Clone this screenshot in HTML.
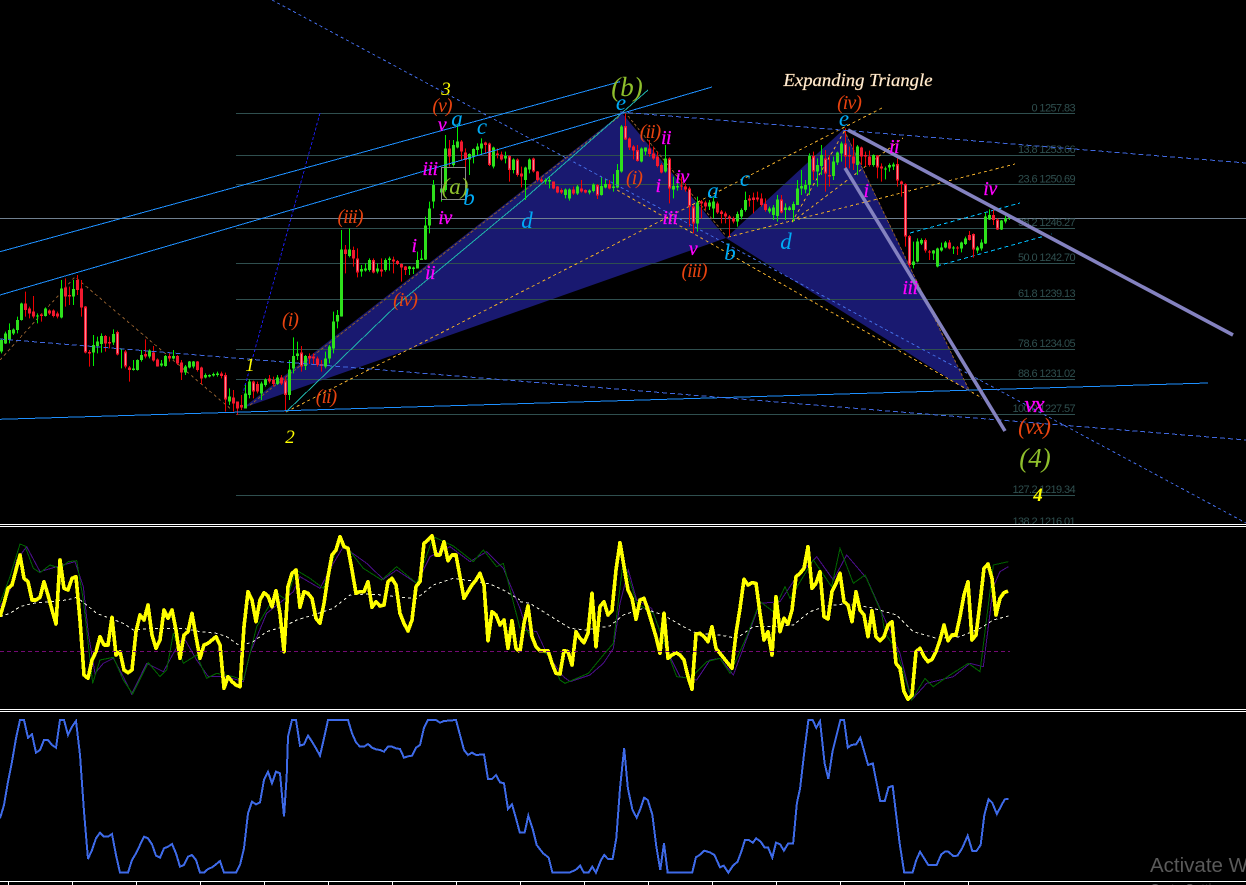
<!DOCTYPE html>
<html>
<head>
<meta charset="utf-8">
<title>Chart</title>
<style>
html,body{margin:0;padding:0;background:#000;width:1246px;height:885px;overflow:hidden}
svg{display:block}
polyline,path,line{vector-effect:non-scaling-stroke}
.c path{vector-effect:none}
text{font-family:"Liberation Serif",serif;font-style:italic;text-anchor:middle}
.o{fill:#e8430f;font-size:20px;letter-spacing:-1px}
.m{fill:#ff00ff;font-size:20px;letter-spacing:-.5px;stroke:#ff00ff;stroke-width:.25px}
.s{fill:#00aaf5;font-size:23px}
.y{fill:#ffff00;font-size:19px}
.g{fill:#8fbf2c;font-size:27px}
.f{font-family:"Liberation Sans",sans-serif;font-style:normal;text-anchor:end;fill:#2f4f4f;font-size:11px;letter-spacing:-.6px}
</style>
</head>
<body>
<svg width="1246" height="885" viewBox="0 0 1246 885" xmlns="http://www.w3.org/2000/svg">
<rect width="1246" height="885" fill="#000"/>

<!-- harmonic pattern fills -->
<polygon points="243,408 622,113 726,238" fill="#191970"/>
<polygon points="726,238 844,129 970,392" fill="#191970"/>

<!-- fib levels -->
<path fill="none" stroke="#2f4f4f" stroke-width="1" shape-rendering="crispEdges" d="M236 113.5H1075M236 155.5H1075M236 184.5H1075M236 228.5H1075M236 263.5H1075M236 299.5H1075M236 349.5H1075M236 379.5H1075M236 414.5H1075M236 495.5H1075"/>
<path d="M0 218.5H1246" stroke="#708090" stroke-width="1" shape-rendering="crispEdges" fill="none"/>

<!-- fib labels -->
<text class="f" x="1075" y="111.5">0 1257.83</text>
<text class="f" x="1075" y="153">13.8 1253.66</text>
<text class="f" x="1075" y="182.5">23.6 1250.69</text>
<text class="f" x="1075" y="226">38.2 1246.27</text>
<text class="f" x="1075" y="261">50.0 1242.70</text>
<text class="f" x="1075" y="297">61.8 1239.13</text>
<text class="f" x="1075" y="347">78.6 1234.05</text>
<text class="f" x="1075" y="377">88.6 1231.02</text>
<text class="f" x="1075" y="412">100.0 1227.57</text>
<text class="f" x="1075" y="493">127.2 1219.34</text>
<text class="f" x="1075" y="525">138.2 1216.01</text>

<!-- dashed lines in and around the patterns -->
<g fill="none" shape-rendering="crispEdges" stroke-width="1">
<path d="M0 360L75 277L232 410" stroke="#8b5a2b" stroke-dasharray="3 3"/>
<path d="M250 405L620 116M628 116L726 236M844 130L970 392" stroke="#8b5a2b" stroke-dasharray="3 2"/>
<path d="M286 412L882 108M728 237L1015 164M792 222L903 138M792 222L845 130M617 190L982 398" stroke="#e8a92a" stroke-dasharray="3 3"/>
<polyline points="286,412 398,304 523,200 648,90" stroke="#20b2aa"/>
<path d="M910 233L1020 203M937 266L1052 234" stroke="#00bfff" stroke-dasharray="4 3"/>
<path d="M320 113L243 393" stroke="#1a1ae0" stroke-dasharray="3 2"/>
</g>

<!-- candles -->
<g class="c" transform="translate(.5,60) scale(1,.33333)" fill="none" shape-rendering="crispEdges">
<path stroke="#00ee00" stroke-width="1" d="M1 838V880M5 815V852M9 790V850M13 805V825M17 770V820M21 728V782M37 760V790M45 742V770M61 660V775M73 660V735M93 825V918M97 830V880M101 820V878M113 808V855M121 865V925M133 900V932M137 898V932M141 870V905M149 868V895M161 900V920M165 885V920M173 870V898M185 915V945M189 903V925M193 903V925M205 940V955M209 943V952M213 938V950M217 935V950M229 985V1035M245 975V1045M249 958V1015M261 965V1020M265 955V980M277 945V975M289 900V1020M293 832V940M297 845V900M305 885V930M325 875V925M329 855V910M333 755V880M337 750V805M341 510V770M349 505V592M361 615V650M365 610V635M369 595V635M377 610V640M385 595V635M389 590V632M409 618V645M413 620V642M417 575V625M421 570V600M425 470V600M429 425V520M433 360V445M441 350V425M445 225V395M453 240V320M457 195V265M469 280V345M473 265V310M477 250V285M481 235V285M493 260V325M505 275V310M513 295V340M525 320V420M529 295V340M545 355V372M549 352V385M565 385V415M569 385V422M577 375V405M589 388V403M593 370V397M601 350V407M605 355V385M613 342V395M617 312V385M621 195V338M641 262V307M645 262V285M665 255V338M673 350V415M677 345V392M697 410V515M709 420V450M713 412V475M737 455V500M741 445V478M745 395V455M769 440V460M773 435V480M777 405V485M785 430V480M789 438V452M793 425V485M797 360V435M801 330V405M805 360V400M809 280V405M817 295V380M821 255V345M833 290V360M837 275V315M841 245V305M857 255V345M873 283V320M885 320V358M889 310V335M893 308V330M913 545V625M917 535V607M921 535V555M933 570V600M937 563V622M941 548V575M945 543V565M953 558V582M961 545V577M965 530V555M977 558V580M981 538V572M985 458V552M989 448V480M1001 480V510M1005 468V490M1009 470V480"/>
<path stroke="#2ee01c" stroke-width="3" d="M1 840V875M5 820V850M9 810V840M13 808V820M17 780V810M21 730V780M37 766V770M45 745V768M61 685V772M73 687V710M93 855V878M97 845V858M101 828V852M113 822V848M121 865V868M133 926V930M137 900V930M141 885V900M149 872V890M161 910V917M165 888V918M173 888V895M185 920V938M189 905V922M193 905V920M205 945V953M209 945V950M213 942V946M217 940V945M229 1010V1025M245 1000V1045M249 965V1005M261 970V1000M265 958V975M277 952V972M289 928V1005M293 888V925M297 880V888M305 888V918M325 895V920M329 860V895M333 785V865M337 765V785M341 568V770M349 568V588M361 627V635M365 625V632M369 600V630M377 625V635M385 600V630M389 595V600M409 620V627M413 622V627M417 600V625M421 595V600M425 497V598M429 445V497M433 375V425M441 385V397M445 265V390M453 255V315M457 245V262M469 282V298M473 267V290M477 260V270M481 250V265M493 262V320M505 288V295M513 298V330M525 322V360M529 298V328M545 360V364M549 360V364M565 388V405M569 388V415M577 380V400M589 392V398M593 373V393M601 378V405M605 372V382M613 380V384M617 330V382M621 200V335M641 265V305M645 262V275M665 295V335M673 378V388M677 378V382M697 428V490M709 428V440M713 425V445M737 462V485M741 450V470M745 420V450M769 445V455M773 442V465M777 418V468M785 442V450M789 442V450M793 432V450M797 385V435M801 378V385M805 375V388M809 288V375M817 315V335M821 285V318M833 305V348M837 278V308M841 250V280M857 260V315M873 285V315M885 325V328M889 315V322M893 313V320M913 605V615M917 545V605M921 540V550M933 572V580M937 565V620M941 562V572M945 547V562M953 562V565M961 548V565M965 535V552M977 562V572M981 548V565M985 470V550M989 465V478M1001 482V508M1005 475V485M1009 473V476"/>
<path stroke="#ee0000" stroke-width="1" d="M25 695V770M29 740V775M33 708V775M41 760V785M49 748V765M53 748V772M57 755V775M65 655V740M69 680V735M77 645V705M81 660V770M85 738V880M89 870V920M105 825V875M109 830V865M117 812V886M125 870V925M129 918V965M145 838V895M153 858V905M157 895V920M169 880V905M177 885V915M181 900V960M197 903V935M201 920V972M221 935V955M225 938V1055M233 990V1055M237 1025V1065M241 1005V1050M253 962V1015M257 965V1000M269 945V970M273 950V980M281 945V975M285 950V1055M301 858V935M309 880V912M313 880V915M317 890V920M321 900V935M345 555V640M353 560V620M357 565V652M373 595V640M381 595V650M393 590V640M397 600V615M401 610V665M405 618V645M449 240V320M461 240V300M465 265V350M485 245V280M489 248V318M497 265V295M501 275V302M509 285V365M517 295V350M521 320V382M533 293V338M537 333V365M541 352V368M553 365V388M557 378V400M561 385V402M573 380V405M581 360V398M585 388V400M597 372V417M609 360V388M625 160V240M629 232V270M633 255V298M637 255V305M649 240V290M653 260V300M657 275V322M661 310V340M669 292V430M681 350V390M685 370V395M689 380V500M693 435V520M701 420V475M705 422V450M717 425V462M721 450V490M725 455V490M729 465V530M733 470V490M749 405V440M753 398V460M757 395V425M761 400V440M765 415V455M781 405V460M813 275V360M825 270V395M829 285V380M845 205V325M849 260V325M853 235V330M861 260V315M865 275V320M869 272V320M877 285V355M881 310V365M897 295V380M901 362V410M905 370V560M909 525V620M925 535V578M929 570V600M949 540V568M957 558V585M969 513V542M973 520V593M993 450V495M997 475V510"/>
<path stroke="#f01a30" stroke-width="3" d="M25 730V750M29 745V760M33 755V770M41 763V768M49 752V760M53 752V768M57 760V770M65 683V710M69 705V710M77 660V690M81 685V742M85 740V878M89 876V880M105 828V850M109 846V850M117 816V884M125 875V920M129 922V930M145 882V890M153 877V902M157 898V920M169 888V896M177 888V910M181 908V938M197 905V930M201 923V955M221 940V948M225 945V1018M233 1012V1030M237 1025V1045M241 1035V1042M253 965V995M257 972V995M269 955V965M273 960V972M281 952V970M285 962V1005M301 877V920M309 888V895M313 890V895M317 895V915M321 912V918M345 568V582M353 570V595M357 595V637M373 600V637M381 628V635M393 598V605M397 603V612M401 612V622M405 620V630M449 265V290M461 245V275M465 278V300M485 248V255M489 250V315M497 280V285M501 283V298M509 288V330M517 298V345M521 340V350M533 295V335M537 335V360M541 358V365M553 365V385M557 380V398M561 390V398M573 388V400M581 385V395M585 390V397M597 375V407M609 372V385M625 198V238M629 235V262M633 260V272M637 270V303M649 265V282M653 280V295M657 290V318M661 315V338M669 295V385M681 376V380M685 380V388M689 385V440M693 440V490M701 425V430M705 428V440M717 430V458M721 455V462M725 460V470M729 470V475M733 475V485M749 415V422M753 412V420M757 412V418M761 415V435M765 432V450M781 418V458M813 288V335M825 295V340M829 345V350M845 250V290M849 285V290M853 290V310M861 262V290M865 285V290M869 290V315M877 287V322M881 320V325M897 312V362M901 365V372M905 372V530M909 528V615M925 540V572M929 575V578M949 547V565M957 562V565M969 525V540M973 522V568M993 465V480M997 478V508"/>
<path stroke="#f58a96" stroke-width="1" d="M85 745V873M117 821V879M125 880V915M225 950V1013M253 970V990M285 967V1000M301 882V915M357 600V632M373 605V632M489 255V310M509 293V325M517 303V340M533 300V330M597 380V402M625 203V233M637 275V298M669 300V380M689 390V435M693 445V485M781 423V453M813 293V330M825 300V335M845 255V285M877 292V317M897 317V357M905 377V525M909 533V610M925 545V567M973 527V563M997 483V503"/>
</g>

<!-- blue lines -->
<g fill="none" shape-rendering="crispEdges">
<path d="M0 251.7L620 81.7M0 295L712 87M0 419.3L1208 383" stroke="#1e90ff" stroke-width="1"/>
<path d="M272 0L1246 523" stroke="#4169e1" stroke-width="1" stroke-dasharray="3 3"/>
<path d="M0 339L1246 440M620 112L1246 163" stroke="#4169e1" stroke-width="1" stroke-dasharray="5 3"/>
</g>

<!-- thick triangle lines -->
<g fill="none" stroke="#8482c0" stroke-width="3.6">
<path d="M848 130L1233 335"/>
<path d="M845 168L1005 431"/>
</g>

<!-- label box -->
<rect x="441.5" y="167.5" width="24" height="32" fill="none" stroke="#8a8a8a" stroke-width="1" shape-rendering="crispEdges"/>

<!-- labels -->
<text x="858" y="86" textLength="149" lengthAdjust="spacingAndGlyphs" font-size="18" fill="#fff4e4" stroke="#e8c090" stroke-width=".35">Expanding Triangle</text>

<text class="y" x="446" y="95">3</text>
<text class="y" x="250" y="371">1</text>
<text class="y" x="290" y="443">2</text>
<text class="y" x="1038" y="501" style="font-weight:bold">4</text>

<text class="o" x="290" y="326">(i)</text>
<text class="o" x="350" y="223">(iii)</text>
<text class="o" x="405" y="306">(iv)</text>
<text class="o" x="326" y="403">(ii)</text>
<text class="o" x="442" y="112">(v)</text>
<text class="o" x="650" y="138">(ii)</text>
<text class="o" x="634" y="184">(i)</text>
<text class="o" x="694" y="277">(iii)</text>
<text class="o" x="849" y="109">(iv)</text>
<text class="o" x="1034" y="434" style="font-size:23px">(vx)</text>

<text class="g" x="455" y="194" style="font-size:23px">(a)</text>
<text class="g" x="627" y="96">(b)</text>
<text class="g" x="1035" y="467">(4)</text>

<text class="m" x="442" y="131">v</text>
<text class="m" x="430" y="175">iii</text>
<text class="m" x="445" y="224">iv</text>
<text class="m" x="414" y="252">i</text>
<text class="m" x="430" y="279">ii</text>
<text class="m" x="666" y="144">ii</text>
<text class="m" x="658" y="192">i</text>
<text class="m" x="682" y="183">iv</text>
<text class="m" x="670" y="224">iii</text>
<text class="m" x="693" y="255">v</text>
<text class="m" x="894" y="153">ii</text>
<text class="m" x="866" y="197">i</text>
<text class="m" x="910" y="294">iii</text>
<text class="m" x="990" y="195">iv</text>
<text class="m" x="1034" y="412" style="font-size:24px;letter-spacing:-1px">vx</text>

<text class="s" x="457" y="126">a</text>
<text class="s" x="482" y="134">c</text>
<text class="s" x="469" y="205">b</text>
<text class="s" x="527" y="228">d</text>
<text class="s" x="621" y="110">e</text>
<text class="s" x="713" y="198">a</text>
<text class="s" x="730" y="260">b</text>
<text class="s" x="745" y="186">c</text>
<text class="s" x="786" y="249">d</text>
<text class="s" x="844" y="126">e</text>

<!-- indicator panel 1 -->
<rect x="0" y="524" width="1246" height="187" fill="#000"/>
<g transform="translate(0,520) scale(.33333)" fill="none" shape-rendering="crispEdges">
<polyline stroke="#4b0e8a" stroke-width="1" points="0,260 30,210 50,120 80,80 120,155 170,140 225,125 250,200 265,340 285,460 310,430 340,415 370,470 395,522 440,430 490,455 520,400 550,350 590,420 625,470 680,470 730,485 750,400 800,280 850,240 880,215 900,170 960,205 1000,130 1030,80 1100,130 1150,178 1190,150 1250,190 1290,110 1350,80 1410,125 1460,95 1510,145 1560,265"/>
<polyline stroke="#006400" stroke-width="1" points="0,250 30,170 60,72 75,78 100,145 120,158 150,135 180,145 205,125 230,122 250,240 278,490 300,420 340,412 370,480 398,522 445,428 480,470 500,450 520,340 550,430 590,405 620,475 650,460 700,470 730,480 770,320 830,220 860,240 888,150 930,175 970,205 1020,55 1090,145 1145,180 1190,140 1250,190 1300,50 1360,78 1420,125 1450,90 1490,140 1510,130 1560,325"/>
<polyline stroke="#f2f2e0" stroke-width="1" stroke-dasharray="3 3" points="0,290 30,280 60,260 100,250 150,245 200,240 230,232 260,255 290,280 330,295 370,310 400,330 450,325 500,325 550,325 600,335 650,340 680,350 720,378 760,365 800,335 850,320 890,300 940,285 1000,265 1050,225 1100,222 1150,225 1200,232 1250,235 1300,195 1360,175 1420,183 1470,192 1510,210 1560,240"/>
<polyline stroke="#ffff00" stroke-width="3.6" stroke-linejoin="round" points="0,290 12,250 24,205 36,195 48,150 60,105 72,175 84,185 96,240 108,240 120,232 132,185 144,225 156,270 168,312 180,120 192,205 204,210 216,175 228,170 240,300 252,465 264,475 276,420 288,395 300,350 312,375 324,375 336,292 348,405 360,395 372,450 384,458 396,450 408,335 420,285 432,300 444,255 456,345 468,385 480,360 492,270 504,295 516,270 528,330 540,415 552,345 564,335 576,280 588,350 600,415 612,375 624,370 636,360 648,350 660,375 672,505 684,470 696,485 708,495 720,500 732,320 744,215 756,240 768,305 780,240 792,218 804,228 816,260 828,212 840,280 852,395 864,200 876,160 888,150 900,262 912,215 924,220 936,235 948,295 960,310 972,250 984,170 996,105 1008,90 1020,50 1032,80 1044,85 1056,150 1068,220 1080,215 1092,215 1104,185 1116,262 1128,245 1140,258 1152,255 1164,185 1176,175 1188,195 1200,280 1212,310 1224,333 1236,300 1248,200 1260,185 1272,70 1284,60 1296,47 1308,105 1320,105 1332,65 1344,122 1356,105 1368,105 1380,170 1392,235 1404,215 1416,195 1428,180 1440,160 1452,195 1464,362 1476,275 1488,285 1500,315 1512,300 1524,385 1536,302 1548,385 1560,395"/>
</g>
<g transform="translate(520,520) scale(.33333)" fill="none" shape-rendering="crispEdges">
<polyline stroke="#4b0e8a" stroke-width="1" points="0,265 20,330 50,335 80,400 130,470 150,485 210,465 250,430 280,385 300,250 325,150 350,240 395,265 440,390 480,470 530,480 570,420 600,415 640,465 690,330 720,250 780,245 830,170 890,110 940,180 980,105 1040,175 1100,310 1140,400 1175,540 1220,490 1300,470 1350,430 1390,440 1420,200 1440,155 1465,140"/>
<polyline stroke="#006400" stroke-width="1" points="0,340 20,330 50,380 90,410 120,480 135,490 205,460 250,405 280,370 310,120 350,250 400,280 440,390 470,470 510,475 560,425 600,415 630,460 680,350 720,245 760,275 795,200 810,235 880,120 935,200 960,85 1000,190 1035,165 1085,280 1095,340 1130,390 1175,540 1215,475 1240,500 1290,465 1345,430 1380,455 1420,135 1465,125"/>
<polyline stroke="#f2f2e0" stroke-width="1" stroke-dasharray="3 3" points="0,245 30,250 70,275 110,300 150,325 200,330 270,318 310,285 370,265 430,285 490,320 530,340 600,345 650,355 700,320 760,320 820,315 870,275 920,258 970,252 1050,262 1130,285 1180,335 1250,355 1320,350 1380,325 1420,300 1465,288"/>
<polyline stroke="#ffff00" stroke-width="3.6" stroke-linejoin="round" points="0,395 12,310 24,258 36,350 48,380 60,392 72,392 84,392 96,430 108,460 120,462 132,392 144,395 156,435 168,335 180,355 192,368 204,340 216,220 228,380 240,260 252,245 264,285 276,272 288,150 300,68 312,140 324,210 336,235 348,298 360,240 372,235 384,270 396,310 408,350 420,400 432,280 444,415 456,405 468,398 480,405 492,420 504,470 516,508 528,342 540,340 552,350 564,365 576,320 588,385 600,400 612,415 624,430 636,445 648,340 660,265 672,178 684,195 696,188 708,190 720,280 732,360 744,335 756,405 768,230 780,335 792,295 804,312 816,270 828,170 840,160 852,145 864,80 876,205 888,190 900,155 912,290 924,297 936,215 948,190 960,160 972,245 984,255 996,305 1008,215 1020,270 1032,285 1044,350 1056,272 1068,350 1080,362 1092,350 1104,315 1116,305 1128,430 1140,445 1152,515 1164,538 1176,525 1188,395 1200,385 1212,410 1224,425 1236,418 1248,395 1260,360 1272,315 1284,362 1296,345 1308,345 1320,290 1332,225 1344,185 1356,360 1368,345 1380,250 1392,145 1404,132 1416,175 1428,285 1440,235 1452,218 1464,213"/>
</g>
<path d="M0 651.5H1010" stroke="#730a73" stroke-width="1" stroke-dasharray="4 3" shape-rendering="crispEdges" fill="none"/>

<!-- indicator panel 2 -->
<g transform="translate(0,705) scale(.33333)" fill="none" shape-rendering="crispEdges">
<polyline stroke="#3e6ae8" stroke-width="2" points="0,340 12,300 24,230 36,170 48,100 60,45 72,45 84,98 96,88 108,143 120,135 132,105 144,105 156,120 168,128 180,45 192,45 204,90 216,65 228,48 240,150 252,320 264,462 276,435 288,400 300,383 312,395 324,395 336,387 348,450 360,503 372,503 384,503 396,465 408,445 420,420 432,395 444,400 456,418 468,452 480,458 492,430 504,425 516,417 528,445 540,485 552,480 564,455 576,450 588,465 600,503 612,503 624,492 636,487 648,478 660,468 672,503 684,503 696,503 708,503 720,480 732,430 744,325 756,290 768,298 780,292 792,225 804,200 816,235 828,200 840,205 852,335 860,215 864,95 876,45 888,45 900,122 912,118 924,92 936,110 948,130 960,152 972,100 984,45 1044,45 1056,85 1068,112 1080,125 1092,125 1104,117 1116,128 1128,133 1140,135 1152,140 1164,125 1176,125 1188,130 1200,132 1212,158 1224,154 1236,152 1248,128 1260,120 1272,68 1284,45 1308,45 1320,53 1332,48 1368,45 1380,90 1392,135 1404,150 1416,143 1428,150 1452,148 1464,222 1476,222 1488,210 1500,232 1512,235 1524,312 1536,298 1548,340 1560,385"/>
</g>
<g transform="translate(520,705) scale(.46296,.33333)" fill="none" shape-rendering="crispEdges">
<polyline stroke="#3e6ae8" stroke-width="2" points="0,383 10,383 18,332 28,375 36,420 50,445 62,458 70,503 106,503 120,495 130,482 138,503 148,503 156,485 164,503 175,465 182,450 190,462 200,462 208,400 216,250 225,130 233,250 243,315 252,338 260,312 268,278 276,285 286,330 294,420 303,495 311,415 319,503 372,503 380,457 390,448 398,437 410,442 420,450 432,487 440,482 450,503 460,482 470,470 478,440 486,405 494,405 503,413 510,400 520,410 528,427 536,428 545,458 553,413 562,418 570,437 579,416 590,415 598,295 605,250 615,130 623,45 632,45 640,68 648,48 658,175 666,222 675,140 692,45 700,45 708,128 716,120 726,118 735,98 752,180 762,175 778,288 788,288 796,247 805,243 820,415 830,503 848,503 856,465 864,440 882,480 900,480 910,448 918,440 925,440 936,453 945,452 955,430 967,392 977,438 986,438 995,420 1003,330 1012,283 1020,293 1030,327 1047,283 1055,282"/>
</g>

<!-- separators and axis -->
<g fill="#ffffff" shape-rendering="crispEdges">
<rect x="0" y="524" width="1246" height="1"/>
<rect x="0" y="526" width="1246" height="1"/>
<rect x="0" y="709" width="1246" height="1"/>
<rect x="0" y="711" width="1246" height="1"/>
<rect x="0" y="881" width="1246" height="1"/>
<rect x="8" y="881" width="1" height="4"/><rect x="72" y="881" width="1" height="4"/><rect x="136" y="881" width="1" height="4"/><rect x="200" y="881" width="1" height="4"/><rect x="264" y="881" width="1" height="4"/><rect x="328" y="881" width="1" height="4"/><rect x="392" y="881" width="1" height="4"/><rect x="456" y="881" width="1" height="4"/><rect x="520" y="881" width="1" height="4"/><rect x="584" y="881" width="1" height="4"/><rect x="648" y="881" width="1" height="4"/><rect x="712" y="881" width="1" height="4"/><rect x="776" y="881" width="1" height="4"/><rect x="840" y="881" width="1" height="4"/><rect x="904" y="881" width="1" height="4"/><rect x="968" y="881" width="1" height="4"/>
</g>

<!-- watermark -->
<rect x="1140" y="850" width="106" height="31" fill="#000"/>
<rect x="1140" y="882" width="106" height="3" fill="#000"/>
<text x="1150" y="872" style="font-family:'Liberation Sans',sans-serif;font-style:normal;text-anchor:start;font-size:20.5px" fill="#5a5a5a">Activate W</text>
<text x="1150" y="893" style="font-family:'Liberation Sans',sans-serif;font-style:normal;text-anchor:start;font-size:13px" fill="#5a5a5a">Go to Settings</text>
</svg>
</body>
</html>
